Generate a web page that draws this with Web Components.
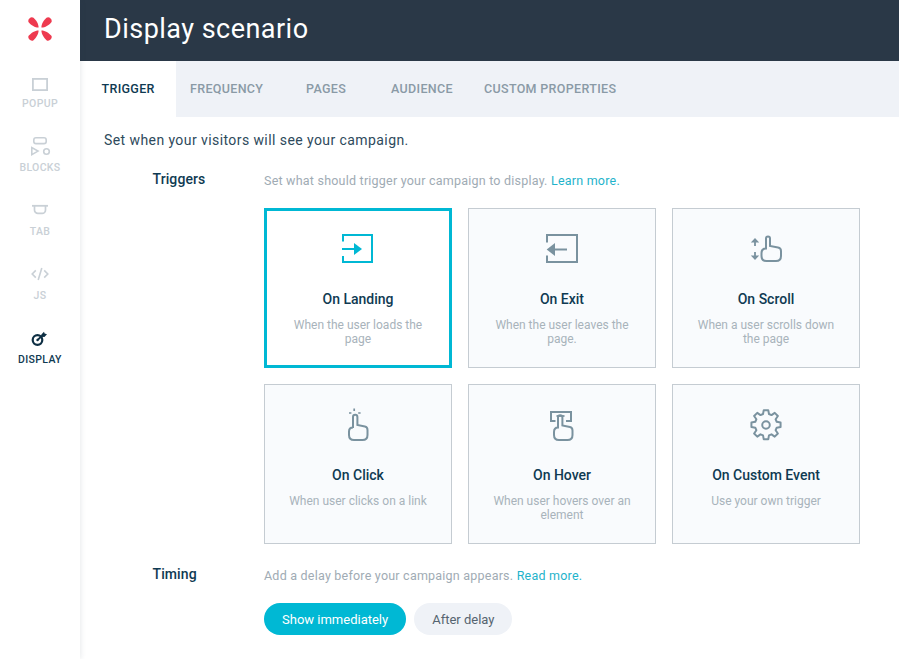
<!DOCTYPE html>
<html lang="en"><head><meta charset="utf-8"><title>Display scenario</title>
<style>
html,body{margin:0;padding:0;height:100%;overflow:hidden;background:#fff;font-family:Roboto,"Liberation Sans",sans-serif}
</style></head><body>
<app-shell>
  <side-bar slot="side">
    <svg slot="logo" width="24" height="24" viewBox="0 0 24 24"><g fill="#ee3a4f"><path transform="translate(12 12) rotate(45)" d="M2 0C4.500-2.600 9-3.500 12.500-3.300 15.800-3 15.800 3 12.500 3.300 9 3.500 4.500 2.600 2 0Z"/><path transform="translate(12 12) rotate(135)" d="M2 0C4.500-2.600 9-3.500 12.500-3.300 15.800-3 15.800 3 12.500 3.300 9 3.500 4.500 2.600 2 0Z"/><path transform="translate(12 12) rotate(225)" d="M2 0C4.500-2.600 9-3.500 12.500-3.300 15.800-3 15.800 3 12.500 3.300 9 3.500 4.500 2.600 2 0Z"/><path transform="translate(12 12) rotate(315)" d="M2 0C4.500-2.600 9-3.500 12.500-3.300 15.800-3 15.800 3 12.500 3.300 9 3.500 4.500 2.600 2 0Z"/></g></svg>
    <side-item label="POPUP"><svg width="20" height="20" viewBox="0 0 20 20" fill="none" stroke="#c9d0d6" stroke-width="1.800"><rect x="2.900" y="4.900" width="14.200" height="11.200"/></svg></side-item>
    <side-item label="BLOCKS"><svg width="20" height="20" viewBox="0 0 20 20" style="overflow:visible" fill="none" stroke="#c9d0d6" stroke-width="1.600"><rect x="3.800" y="-.2" width="12.400" height="5.800" rx="2.200"/><path d="M1.800 9.600v7l6.200-3.500z"/><circle cx="16.500" cy="13.500" r="2.800"/></svg></side-item>
    <side-item label="TAB"><svg width="20" height="20" viewBox="0 0 20 20" fill="none" stroke="#c9d0d6" stroke-width="1.700"><path d="M2 3.800h16" stroke-width="1.800"/><path d="M4.500 4v4a3.400 3.400 0 0 0 3.400 3.400h4.200a3.400 3.400 0 0 0 3.400-3.400V4"/></svg></side-item>
    <side-item label="JS"><svg width="20" height="20" viewBox="0 0 20 20" fill="none" stroke="#c9d0d6" stroke-width="1.600"><path d="M5.800 4.400 2.200 8l3.600 3.600M14.200 4.400 17.800 8l-3.600 3.600M11.800 2 8.200 14"/></svg></side-item>
    <side-item label="DISPLAY" active><svg width="20" height="20" viewBox="0 0 20 20" fill="none" stroke="#0e2f44" stroke-width="2.200"><circle cx="7.500" cy="10" r="4.800"/><circle cx="7.500" cy="10" r="1.200" fill="#0e2f44" stroke="none"/><path d="M7.500 10 13 5" stroke-width="1.700"/><path d="M11.400 4.400 14 1.800l.6 1.800 2.400.6-2.600 2.800-2.800-.2z" fill="#0e2f44" stroke="none"/></svg></side-item>
  </side-bar>
  <page-header slot="head">Display scenario</page-header>
  <tab-bar slot="tabs">
    <tab-item active style="--w:96px;--pl:21.500px">TRIGGER</tab-item>
    <tab-item style="--w:116px;--pl:14px">FREQUENCY</tab-item>
    <tab-item style="--w:85px;--pl:14px">PAGES</tab-item>
    <tab-item style="--w:93px;--pl:14px">AUDIENCE</tab-item>
    <tab-item style="--w:150px;--pl:14px">CUSTOM PROPERTIES</tab-item>
  </tab-bar>
  <intro-text slot="body">Set when your visitors will see your campaign.</intro-text>
  <form-row slot="body" label="Triggers" style="--top:20px">
    <hint-text>Set what should trigger your campaign to display. <a>Learn more.</a></hint-text>
    <card-grid>
      <trigger-card selected title-text="On Landing" desc="When the user loads the page">
        <svg width="40" height="40" viewBox="0 0 40 40" fill="none" stroke="#00b8d4" stroke-width="2"><path d="M5 12.600V6h29v27H5v-6"/><path d="M4 20h12.500"/><path d="M16 14l8 6-8 6z" fill="#00b8d4" stroke="none"/></svg>
      </trigger-card>
      <trigger-card title-text="On Exit" desc="When the user leaves the page.">
        <svg width="40" height="40" viewBox="0 0 40 40" fill="none" stroke="#7a929f" stroke-width="2"><path d="M5 13.500V6h30v27H5v-6.500"/><path d="M12 20.500h13"/><path d="M13 14l-8.300 6.500L13 27z" fill="#7a929f" stroke="none"/></svg>
      </trigger-card>
      <trigger-card title-text="On Scroll" desc="When a user scrolls down the page">
        <svg width="40" height="40" viewBox="0 0 40 40" fill="none" stroke="#7a929f" stroke-width="2"><path d="M20 19.500V9.500a2 2 0 0 1 4 0V17l8 1.500c2 .4 3 1.500 3 3.500v5c0 3-2 5-5 5H20.500c-3 0-5-2-5-5v-3c0-3 1.800-4.500 4.500-4.500z"/><path d="M9 12v5M9 23v5" stroke-width="1.800"/><path d="M4.800 13.500 9 9l4.200 4.500zM4.800 26.500 9 31l4.200-4.500z" fill="#7a929f" stroke="none"/></svg>
      </trigger-card>
      <trigger-card title-text="On Click" desc="When user clicks on a link">
        <svg width="40" height="40" viewBox="0 0 40 40" fill="none" stroke="#7a929f" stroke-width="2"><path d="M15 23V12a2.200 2.200 0 0 1 4.400 0v8l7.500 1.500c1.800.4 2.600 1.500 2.600 3.500v5c0 3-2 5-5 5H16c-3 0-5-2-5-5v-3.500c0-2.500 1.500-4 4-4z"/><path d="M11 8h2.400M16.200 3.500v2.600M20.200 8h2.400" stroke-width="1.700"/></svg>
      </trigger-card>
      <trigger-card title-text="On Hover" desc="When user hovers over an element">
        <svg width="40" height="40" viewBox="0 0 40 40" fill="none" stroke="#7a929f" stroke-width="2"><path d="M13.500 16H9V7h20v9h-5"/><path d="M14.500 11h8" stroke-width="1.800"/><path d="M16 22.500V12.500a2.200 2.200 0 0 1 4.400 0v8l7.500 1.500c1.800.4 2.600 1.500 2.600 3.500v4.500c0 3-2 5-5 5H17c-3 0-5-2-5-5V27c0-2.500 1.500-4.500 4-4.500z"/></svg>
      </trigger-card>
      <trigger-card title-text="On Custom Event" desc="Use your own trigger">
        <svg width="40" height="40" viewBox="0 0 40 40" fill="none" stroke="#7a929f" stroke-width="2.200" stroke-linejoin="round"><g transform="translate(20 20) scale(.9) translate(-20 -20)"><path d="M17.500 3.500h5l.8 4.300 2.800 1.200 3.600-2.500 3.500 3.500-2.500 3.600 1.200 2.800 4.300.8v5l-4.300.8-1.200 2.800 2.500 3.600-3.500 3.500-3.600-2.500-2.800 1.200-.8 4.300h-5l-.8-4.300-2.800-1.200-3.600 2.500-3.500-3.500 2.500-3.600-1.200-2.800-4.300-.8v-5l4.300-.8 1.200-2.800-2.500-3.600 3.500-3.500 3.600 2.500 2.800-1.200z"/><circle cx="20" cy="20" r="4.200"/></g></svg>
      </trigger-card>
    </card-grid>
  </form-row>
  <form-row slot="body" label="Timing" style="--top:20px">
    <hint-text>Add a delay before your campaign appears. <a>Read more.</a></hint-text>
    <pill-group>
      <pill-button active>Show immediately</pill-button>
      <pill-button>After delay</pill-button>
    </pill-group>
  </form-row>
</app-shell>
<script>
function def(name, html){
  customElements.define(name, class extends HTMLElement{
    constructor(){super();this.attachShadow({mode:'open'});}
    connectedCallback(){
      const g=a=>this.getAttribute(a)||'';
      this.shadowRoot.innerHTML=typeof html==='function'?html(g):html;
    }
  });
}
def('app-shell',`<style>
:host{display:grid;grid-template-columns:80px 1fr;grid-template-rows:61px 56px 1fr;height:659px;width:899px;overflow:hidden}
.s{grid-row:1/4;position:relative;z-index:2}
.b{min-width:0}
</style>
<div class="s"><slot name="side"></slot></div>
<slot name="head"></slot>
<slot name="tabs"></slot>
<div class="b"><slot name="body"></slot></div>`);
def('side-bar',`<style>
:host{display:flex;flex-direction:column;align-items:stretch;height:100%;background:#fff;box-shadow:1px 0 5px rgba(40,60,80,.1)}
.l{display:flex;justify-content:center;padding-top:17px;height:47px;flex:none}
.i{display:flex;flex-direction:column}
</style>
<div class="l"><slot name="logo"></slot></div><div class="i"><slot></slot></div>`);
def('side-item',g=>`<style>
:host{display:flex;flex-direction:column;align-items:center;height:64px;padding-top:10px;box-sizing:border-box;font:500 10.500px/13px Roboto,sans-serif;letter-spacing:.33px;color:#c9d0d6}
:host([active]){color:#0f3a52}
.ic{height:20px;display:flex;align-items:center;justify-content:center;margin-bottom:3px}
</style><div class="ic"><slot></slot></div><span>${g('label')}</span>`);
def('page-header',`<style>
:host{display:flex;align-items:center;background:#2a3847;color:#fff;font:400 27px/1 Roboto,sans-serif;padding:0 24px 2px;box-sizing:border-box;letter-spacing:.47px}
</style><slot></slot>`);
def('tab-bar',`<style>:host{display:flex;background:#eff2f7}</style><slot></slot>`);
def('tab-item',`<style>
:host{display:flex;align-items:center;width:var(--w);padding-left:var(--pl);box-sizing:border-box;font:500 12.500px/1 Roboto,sans-serif;letter-spacing:.33px;color:#8a9aa6;white-space:nowrap}
:host([active]){background:#fff;color:#0f3a52}
</style><slot></slot>`);
def('intro-text',`<style>
:host{display:block;padding:15px 0 0 24px;font:400 14px/17px Roboto,sans-serif;letter-spacing:.42px;color:#2e4a5c}
</style><slot></slot>`);
def('form-row',g=>`<style>
:host{display:grid;grid-template-columns:111.500px 1fr;margin-top:var(--top);padding-left:72.500px}
.t{font:500 14px/20px Roboto,sans-serif;color:#0f3a52;letter-spacing:.1px}
</style><div class="t">${g('label')}</div><div><slot></slot></div>`);
def('hint-text',`<style>
:host{display:block;font:400 12.500px/18px Roboto,sans-serif;letter-spacing:.22px;color:#a0abb4;padding-top:3px}
::slotted(a){color:#1fb3cb}
</style><slot></slot>`);
def('card-grid',`<style>
:host{display:grid;grid-template-columns:repeat(3,188px);grid-auto-rows:160px;gap:16px;margin-top:18px}
</style><slot></slot>`);
def('trigger-card',g=>`<style>
:host{display:flex;flex-direction:column;align-items:center;background:#f9fbfd;border:1px solid #c5ccd2;box-sizing:border-box;padding-top:20px;text-align:center}
:host([selected]){background:#fff;border:3px solid #00b8d4;padding-top:18px}
.w{height:40px;display:flex}
h3{margin:20px 0 0;font:500 14px/20px Roboto,sans-serif;color:#0f3a52}
p{margin:9px 0 0;padding:0 20px;font:400 12px/14px Roboto,sans-serif;letter-spacing:0;color:#a8b3bb}
:host([selected]) p{padding:0 18px}
</style><div class="w"><slot></slot></div><h3>${g('title-text')}</h3><p>${g('desc')}</p>`);
def('pill-group',`<style>:host{display:flex;gap:8px;margin-top:18px}</style><slot></slot>`);
def('pill-button',`<style>
:host{display:flex;align-items:center;justify-content:center;height:32px;padding:0 18px;border-radius:16px;background:#eff2f7;color:#556470;font:400 13px/1 Roboto,sans-serif;letter-spacing:0}
:host([active]){background:#00b8d4;color:#fff}
</style><slot></slot>`);
</script>
</body></html>
